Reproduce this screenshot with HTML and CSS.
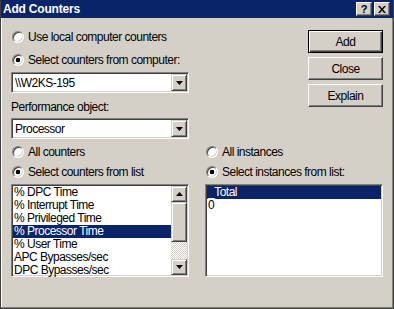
FILE: index.html
```html
<!DOCTYPE html>
<html>
<head>
<meta charset="utf-8">
<title>Add Counters</title>
<link rel="stylesheet" href="styles.css">
</head>
<body>
<div class="window">
  <div class="titlebar">
    <span class="title">Add Counters</span>
    <div class="tbtns">
      <span class="tbtn help">?</span>
      <span class="tbtn">
        <svg width="8" height="7" viewBox="0 0 8 7"><path d="M0 0h2l2 2.5L6 0h2L5 3.5L8 7H6L4 4.5L2 7H0l3-3.5z" fill="#000"/></svg>
      </span>
    </div>
  </div>
  <div class="body">
    <div class="top">
      <div class="left">
        <div class="radio"><span class="rb"></span><span>Use local computer counters</span></div>
        <div class="radio r2 checked"><span class="rb"></span><span>Select counters from computer:</span></div>
        <div class="combo field c1">
          <span class="combo-text">\\W2KS-195</span>
          <span class="combo-btn raised"><svg width="7" height="4" viewBox="0 0 7 4"><path d="M0 0h7L3.5 4z" fill="#000"/></svg></span>
        </div>
        <div class="label">Performance object:</div>
        <div class="combo field c2">
          <span class="combo-text">Processor</span>
          <span class="combo-btn raised"><svg width="7" height="4" viewBox="0 0 7 4"><path d="M0 0h7L3.5 4z" fill="#000"/></svg></span>
        </div>
      </div>
      <div class="buttons">
        <div class="btn default">Add</div>
        <div class="btn">Close</div>
        <div class="btn">Explain</div>
      </div>
    </div>
    <div class="bottom">
      <div class="col">
        <div class="radio"><span class="rb"></span><span>All counters</span></div>
        <div class="radio r2 checked"><span class="rb"></span><span>Select counters from list</span></div>
        <div class="list field">
          <div class="items">
            <div class="item">% DPC Time</div>
            <div class="item">% Interrupt Time</div>
            <div class="item">% Privileged Time</div>
            <div class="item sel">% Processor Time</div>
            <div class="item">% User Time</div>
            <div class="item">APC Bypasses/sec</div>
            <div class="item">DPC Bypasses/sec</div>
          </div>
          <div class="scroll">
            <span class="sbtn raised"><svg width="7" height="4" viewBox="0 0 7 4"><path d="M0 4h7L3.5 0z" fill="#000"/></svg></span>
            <span class="thumb raised"></span>
            <span class="track"></span>
            <span class="sbtn raised"><svg width="7" height="4" viewBox="0 0 7 4"><path d="M0 0h7L3.5 4z" fill="#000"/></svg></span>
          </div>
        </div>
      </div>
      <div class="col">
        <div class="radio"><span class="rb"></span><span>All instances</span></div>
        <div class="radio r2 checked"><span class="rb"></span><span>Select instances from list:</span></div>
        <div class="list field">
          <div class="items">
            <div class="item sel">_Total</div>
            <div class="item">0</div>
          </div>
        </div>
      </div>
    </div>
  </div>
</div>
</body>
</html>
```

FILE: styles.css
```css
* { box-sizing: border-box; }
html, body { margin: 0; padding: 0; }
body {
  width: 394px;
  height: 309px;
  overflow: hidden;
  background: #d4d0c8;
  font-family: "Liberation Sans", Arial, sans-serif;
  font-size: 12px;
  letter-spacing: -0.5px;
  color: #000;
}
.window {
  width: 394px;
  height: 309px;
  display: flex;
  flex-direction: column;
  background: #d4d0c8;
  border: 1px solid #404040;
  border-top: 0;
  box-shadow: inset -1px -1px #808080, inset 1px 0 #ffffff;
}
.titlebar {
  height: 18px;
  flex: none;
  background: #0a246a;
  display: flex;
  align-items: center;
  justify-content: space-between;
  padding: 0 3px 0 2px;
}
.title {
  color: #fff;
  font-weight: bold;
  font-size: 12px;
  letter-spacing: -0.2px;
}
.tbtns { display: flex; gap: 2px; }
.tbtn {
  width: 16px;
  height: 14px;
  display: flex;
  align-items: center;
  justify-content: center;
  background: #d4d0c8;
  border: 1px solid;
  border-color: #ffffff #404040 #404040 #ffffff;
  box-shadow: inset -1px -1px #808080;
  font-weight: bold;
  font-size: 11px;
  letter-spacing: 0;
  line-height: 1;
}
.body {
  flex: 1;
  padding: 11px 10px 0 10px;
}
.top {
  display: flex;
  justify-content: space-between;
}
.left {
  width: 178px;
  display: flex;
  flex-direction: column;
}
.radio {
  height: 16px;
  display: flex;
  align-items: center;
  gap: 4px;
  padding-left: 1px;
  white-space: nowrap;
}
.radio.r2 { margin-top: 7px; }
.rb {
  flex: none;
  width: 12px;
  height: 12px;
  border-radius: 50%;
  background: #fff;
  border: 1px solid;
  border-color: #808080 #ffffff #ffffff #808080;
  box-shadow: inset 1px 1px #404040, inset -1px -1px #d4d0c8;
}
.checked .rb {
  background: radial-gradient(circle at 50% 50%, #000 0, #000 2px, #fff 2.6px);
}
.field {
  background: #fff;
  border: 1px solid;
  border-color: #808080 #ffffff #ffffff #808080;
  box-shadow: inset 1px 1px #404040, inset -1px -1px #d4d0c8;
  padding: 1px;
}
.raised {
  background: #d4d0c8;
  border: 1px solid;
  border-color: #d4d0c8 #404040 #404040 #d4d0c8;
  box-shadow: inset 1px 1px #ffffff, inset -1px -1px #808080;
}
.combo {
  height: 21px;
  display: flex;
  align-items: stretch;
}
.c1 { margin-top: 4px; }
.c2 { margin-top: 4px; }
.combo-text {
  flex: 1;
  padding-left: 2px;
  display: flex;
  align-items: center;
  white-space: nowrap;
}
.combo-btn {
  width: 16px;
  display: flex;
  align-items: center;
  justify-content: center;
}
.label {
  height: 14px;
  margin-top: 7px;
  display: flex;
  align-items: center;
  white-space: nowrap;
}
.buttons {
  width: 75px;
  display: flex;
  flex-direction: column;
  gap: 4px;
  padding-top: 1px;
}
.btn {
  height: 23px;
  display: flex;
  align-items: center;
  justify-content: center;
  background: #d4d0c8;
  border: 1px solid;
  border-color: #ffffff #404040 #404040 #ffffff;
  box-shadow: inset -1px -1px #808080;
}
.btn.default {
  border-color: #000;
  box-shadow: inset 1px 1px #ffffff, inset -1px -1px #404040, inset -2px -2px #808080;
}
.bottom {
  margin-top: 5px;
  display: grid;
  grid-template-columns: 178px 178px;
  column-gap: 16px;
}
.col {
  display: flex;
  flex-direction: column;
}
.col .radio.r2 { margin-top: 4px; }
.list {
  margin-top: 4px;
  height: 93px;
  display: flex;
}
.items {
  flex: 1;
  min-width: 0;
}
.item {
  height: 13px;
  line-height: 13px;
  padding-left: 1px;
  white-space: nowrap;
  overflow: hidden;
}
.item.sel {
  background: #0a246a;
  color: #fff;
}
.scroll {
  width: 16px;
  display: flex;
  flex-direction: column;
}
.sbtn {
  height: 16px;
  display: flex;
  align-items: center;
  justify-content: center;
}
.thumb { height: 40px; }
.track {
  flex: 1;
  background-color: #fff;
  background-image: conic-gradient(#d4d0c8 25%, #fff 0 50%, #d4d0c8 0 75%, #fff 0);
  background-size: 2px 2px;
}
```
